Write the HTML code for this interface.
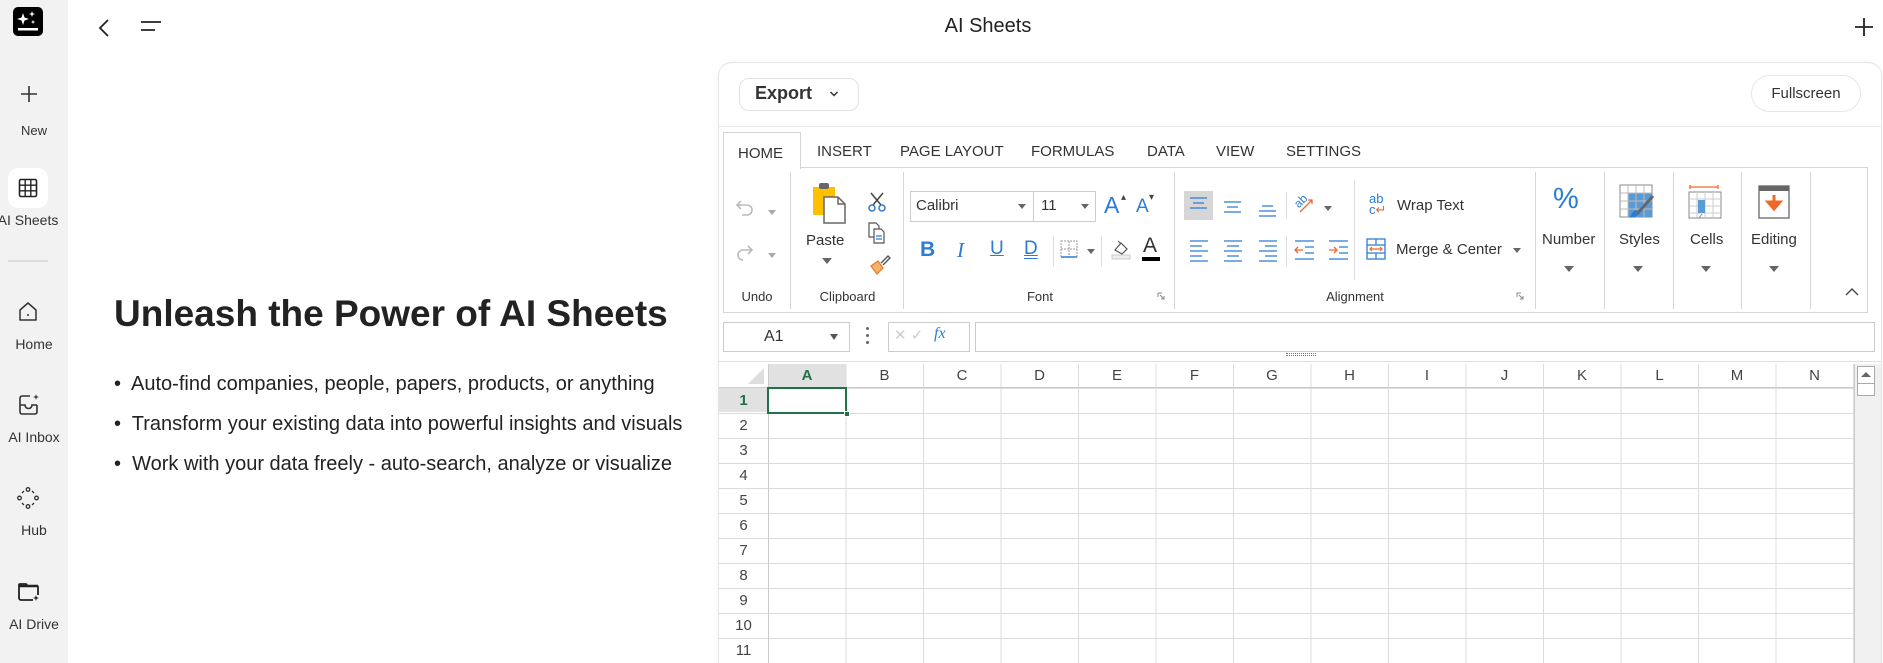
<!DOCTYPE html>
<html><head><meta charset="utf-8"><style>
*{box-sizing:border-box;margin:0;padding:0}
html,body{width:1883px;height:663px;overflow:hidden;background:#fff}
body{font-family:"Liberation Sans",Arial,sans-serif;color:#222}
#root{position:relative;width:1883px;height:663px;overflow:hidden}
.a{position:absolute}
.side{left:0;top:0;width:68px;height:663px;background:#f2f2f2}
.lbl{width:68px;text-align:center;font-size:13px;color:#333}
.tab{font-size:15px;color:#333;top:143px}
.gl{font-size:13px;color:#333;top:289px;text-align:center}
.sep{width:1px;background:#d6d6d6;top:172px;height:137px}
.rl{font-size:15px;color:#333}
.tri{width:0;height:0;border-left:5px solid transparent;border-right:5px solid transparent;border-top:6px solid #666}
.ch{top:364px;height:24px;font-size:15px;color:#444;text-align:center;line-height:24px}
.rh{left:719px;width:49px;height:25px;font-size:15px;color:#444;text-align:center;line-height:25px}
</style></head><body><div id="root">
<div class="a side"></div>
<div class="a" style="left:13px;top:7px;width:30px;height:29px;background:#000;border-radius:5px"></div>
<svg class="a" style="left:13px;top:7px" width="30" height="29" viewBox="0 0 30 29"><path d="M10 6 L11.5 10.5 L16 12 L11.5 13.5 L10 18 L8.5 13.5 L4 12 L8.5 10.5Z" fill="#fff"/><path d="M19 4 L19.8 6.2 L22 7 L19.8 7.8 L19 10 L18.2 7.8 L16 7 L18.2 6.2Z" fill="#fff"/><path d="M20 13 L20.6 14.4 L22 15 L20.6 15.6 L20 17 L19.4 15.6 L18 15 L19.4 14.4Z" fill="#fff"/><rect x="5" y="21" width="20" height="2.5" fill="#fff"/></svg>
<svg class="a" style="left:18px;top:83px" width="22" height="22"><path d="M11 3v16M3 11h16" stroke="#333" stroke-width="1.6"/></svg>
<div class="a lbl" style="top:123px">New</div>
<div class="a" style="left:8px;top:168px;width:40px;height:40px;background:#fff;border-radius:10px"></div>
<svg class="a" style="left:18px;top:178px" width="20" height="20"><rect x="1.5" y="1.5" width="17" height="17" rx="1.5" fill="none" stroke="#222" stroke-width="1.6"/><path d="M7.2 1.5v17M12.8 1.5v17M1.5 7.2h17M1.5 12.8h17" stroke="#222" stroke-width="1.4"/></svg>
<div class="a lbl" style="top:212px;left:-6px;font-size:14px">AI Sheets</div>
<div class="a" style="left:8px;top:260px;width:40px;height:2px;background:#ddd"></div>
<svg class="a" style="left:17px;top:300px" width="22" height="24"><path d="M3 10 L11 3 L19 10 V20 H3Z" fill="none" stroke="#333" stroke-width="1.5" stroke-linejoin="round"/><circle cx="11" cy="15" r="1" fill="#333"/></svg>
<div class="a lbl" style="top:336px;font-size:14px">Home</div>
<svg class="a" style="left:17px;top:393px" width="24" height="24"><path d="M13 3H5a2 2 0 0 0-2 2v14a2 2 0 0 0 2 2h13a2 2 0 0 0 2-2V12" fill="none" stroke="#333" stroke-width="1.6"/><path d="M3 12h5c0 2 1.5 3.5 3.5 3.5S15 14 15 12h5" fill="none" stroke="#333" stroke-width="1.6"/><path d="M19 1 L19.7 3.3 L22 4 L19.7 4.7 L19 7 L18.3 4.7 L16 4 L18.3 3.3Z" fill="#333"/></svg>
<div class="a lbl" style="top:429px;font-size:14px">AI Inbox</div>
<svg class="a" style="left:16px;top:486px" width="24" height="24"><g fill="none" stroke="#333" stroke-width="1.3"><circle cx="12" cy="3.5" r="1.8"/><circle cx="3.5" cy="12" r="1.8"/><circle cx="20.5" cy="12" r="1.8"/><circle cx="12" cy="20.5" r="1.8"/><path d="M6 7L8 5M16 5L18 7M6 17L8 19M16 19L18 17"/></g></svg>
<div class="a lbl" style="top:522px;font-size:14px">Hub</div>
<svg class="a" style="left:17px;top:580px" width="24" height="24"><path d="M2 5V18a2 2 0 0 0 2 2h12M2 5a1 1 0 0 1 1-1h6l2 2h9a1 1 0 0 1 1 1v8" fill="none" stroke="#222" stroke-width="1.8"/><path d="M2 6h19" stroke="#222" stroke-width="2.5"/><path d="M19 15 L19.8 17.2 L22 18 L19.8 18.8 L19 21 L18.2 18.8 L16 18 L18.2 17.2Z" fill="#222"/></svg>
<div class="a lbl" style="top:616px;font-size:14px">AI Drive</div>

<svg class="a" style="left:96px;top:18px" width="16" height="20"><path d="M12 2L4 10L12 18" fill="none" stroke="#222" stroke-width="1.8"/></svg>
<svg class="a" style="left:139px;top:19px" width="24" height="14"><path d="M2 3h20M2 11h14" stroke="#222" stroke-width="1.8"/></svg>
<div class="a" style="left:900px;top:15px;width:176px;text-align:center;font-size:20px;color:#222">AI Sheets</div>
<svg class="a" style="left:1853px;top:16px" width="22" height="22"><path d="M11 2v18M2 11h18" stroke="#222" stroke-width="1.8"/></svg>

<div class="a" style="left:114px;top:293px;font-size:37px;font-weight:bold;color:#222;white-space:nowrap">Unleash the Power of AI Sheets</div>
<div class="a" style="left:114px;top:364px;font-size:20px;line-height:40px;color:#222;white-space:nowrap">
<div>•&nbsp; Auto-find companies, people, papers, products, or anything</div>
<div>•&nbsp; Transform your existing data into powerful insights and visuals</div>
<div>•&nbsp; Work with your data freely - auto-search, analyze or visualize</div>
</div>

<div class="a" style="left:718px;top:62px;width:1164px;height:640px;border:1px solid #e6e6e6;border-radius:14px;box-shadow:0 0 6px rgba(0,0,0,.04)"></div>
<div class="a" style="left:739px;top:78px;width:120px;height:33px;border:1px solid #e2e2e2;border-radius:10px"></div>
<div class="a" style="left:755px;top:83px;font-size:18px;font-weight:bold;color:#333">Export</div>
<svg class="a" style="left:829px;top:90px" width="10" height="8"><path d="M1.5 2L5 5.5L8.5 2" fill="none" stroke="#333" stroke-width="1.5"/></svg>
<div class="a" style="left:1751px;top:75px;width:110px;height:37px;border:1px solid #e6e6e6;border-radius:19px;font-size:15px;color:#333;text-align:center;line-height:35px">Fullscreen</div>
<div class="a" style="left:719px;top:126px;width:1162px;height:1px;background:#e6e6e6"></div>

<div class="a" style="left:723px;top:167px;width:1145px;height:146px;border:1px solid #d4d4d4"></div>
<div class="a" style="left:723px;top:132px;width:78px;height:37px;border:1px solid #d4d4d4;border-bottom:none;background:#fff"></div>
<div class="a tab" style="left:738px;top:145px">HOME</div>
<div class="a tab" style="left:817px">INSERT</div>
<div class="a tab" style="left:900px">PAGE LAYOUT</div>
<div class="a tab" style="left:1031px">FORMULAS</div>
<div class="a tab" style="left:1147px">DATA</div>
<div class="a tab" style="left:1216px">VIEW</div>
<div class="a tab" style="left:1286px">SETTINGS</div>

<div class="a sep" style="left:790px"></div>
<div class="a sep" style="left:903px"></div>
<div class="a sep" style="left:1174px"></div>
<div class="a sep" style="left:1535px"></div>
<div class="a sep" style="left:1604px"></div>
<div class="a sep" style="left:1673px"></div>
<div class="a sep" style="left:1741px"></div>
<div class="a sep" style="left:1810px"></div>

<div class="a gl" style="left:727px;width:60px">Undo</div>
<div class="a gl" style="left:800px;width:95px">Clipboard</div>
<div class="a gl" style="left:1000px;width:80px">Font</div>
<div class="a gl" style="left:1305px;width:100px">Alignment</div>
<svg class="a" style="left:1157px;top:292px" width="8" height="8"><path d="M1 1h4M1 1v4M3 3l4 4M7 4v3H4" fill="none" stroke="#888"/></svg>
<svg class="a" style="left:1516px;top:292px" width="8" height="8"><path d="M1 1h4M1 1v4M3 3l4 4M7 4v3H4" fill="none" stroke="#888"/></svg>

<svg class="a" style="left:734px;top:200px" width="22" height="18"><path d="M4 5h9a5 5 0 0 1 0 10H8M7 1L3 5l4 4" fill="none" stroke="#bbb" stroke-width="1.6"/></svg>
<div class="a tri" style="left:768px;top:210px;border-top-color:#aaa;border-width:5px 4px 0"></div>
<svg class="a" style="left:734px;top:245px" width="22" height="20"><path d="M17 5H9a5 5 0 0 0 0 10M14 1l4 4-4 4" fill="none" stroke="#bbb" stroke-width="1.6"/></svg>
<div class="a tri" style="left:768px;top:253px;border-top-color:#aaa;border-width:5px 4px 0"></div>
<svg class="a" style="left:812px;top:182px" width="36" height="42"><rect x="1" y="5" width="22" height="28" fill="#ffc000"/><rect x="7" y="1" width="10" height="6" rx="2" fill="#666"/><path d="M12 15h14l7 7v19H12Z" fill="#fff" stroke="#666" stroke-width="1.5"/><path d="M26 15v7h7" fill="none" stroke="#666" stroke-width="1.5"/></svg>
<div class="a" style="left:806px;top:232px;font-size:15px;color:#333">Paste</div>
<div class="a tri" style="left:822px;top:258px"></div>
<svg class="a" style="left:867px;top:192px" width="20" height="20"><path d="M4 1l10 12M16 1L6 13" stroke="#444" stroke-width="1.5"/><circle cx="5" cy="16" r="3" fill="none" stroke="#2b7cd3" stroke-width="1.5"/><circle cx="15" cy="16" r="3" fill="none" stroke="#2b7cd3" stroke-width="1.5"/></svg>
<svg class="a" style="left:868px;top:222px" width="18" height="22"><path d="M1 1h7l3 3v11H1Z" fill="#fff" stroke="#555" stroke-width="1.2"/><path d="M6 7h7l3 3v11H6Z" fill="#fff" stroke="#555" stroke-width="1.2"/><path d="M8 14h6M8 17h6" stroke="#2b7cd3" stroke-width="1.2"/></svg>
<svg class="a" style="left:869px;top:254px" width="22" height="22"><path d="M2 12l7-5 5 7-6 6Z" fill="#f6b26b" stroke="#e07b2a" stroke-width="1.2"/><path d="M12 9l7-7 2 2-7 7" fill="none" stroke="#555" stroke-width="1.4"/></svg>

<div class="a" style="left:910px;top:191px;width:124px;height:31px;border:1px solid #ccc"></div>
<div class="a" style="left:1033px;top:191px;width:63px;height:31px;border:1px solid #ccc"></div>
<div class="a rl" style="left:916px;top:197px">Calibri</div>
<div class="a tri" style="left:1018px;top:204px;border-width:5px 4px 0"></div>
<div class="a rl" style="left:1041px;top:197px">11</div>
<div class="a tri" style="left:1081px;top:204px;border-width:5px 4px 0"></div>
<div class="a" style="left:1104px;top:192px;font-size:23px;color:#2b7cd3">A</div>
<div class="a" style="left:1121px;top:192px;font-size:10px;color:#444">▴</div>
<div class="a" style="left:1136px;top:196px;font-size:19px;color:#2b7cd3">A</div>
<div class="a" style="left:1149px;top:192px;font-size:10px;color:#444">▾</div>
<div class="a" style="left:920px;top:238px;font-size:21px;font-weight:bold;color:#2b7cd3">B</div>
<div class="a" style="left:957px;top:238px;font-size:21px;font-style:italic;color:#2b7cd3;font-family:'Liberation Serif',serif">I</div>
<div class="a" style="left:990px;top:238px;font-size:19px;text-decoration:underline;color:#2b7cd3">U</div>
<div class="a" style="left:1024px;top:238px;font-size:19px;text-decoration:underline double;color:#2b7cd3">D</div>
<div class="a" style="left:1053px;top:236px;width:1px;height:30px;background:#ddd"></div>
<svg class="a" style="left:1060px;top:240px" width="18" height="18"><rect x="1" y="1" width="16" height="16" fill="none" stroke="#999" stroke-dasharray="2 1"/><path d="M9 1v16M1 9h16" stroke="#999" stroke-dasharray="2 1"/><path d="M1 17h16" stroke="#2b7cd3" stroke-width="1.5"/></svg>
<div class="a tri" style="left:1087px;top:249px;border-width:5px 4px 0"></div>
<div class="a" style="left:1101px;top:236px;width:1px;height:30px;background:#ddd"></div>
<svg class="a" style="left:1111px;top:238px" width="20" height="22"><path d="M4 12l6-7 6 6-5 5Z" fill="#fff" stroke="#555" stroke-width="1.2"/><path d="M7 3l3 3" stroke="#555"/><rect x="1" y="17" width="18" height="4" fill="#eee" stroke="#ccc"/></svg>
<div class="a" style="left:1143px;top:234px;font-size:21px;color:#333">A</div>
<div class="a" style="left:1142px;top:257px;width:18px;height:4px;background:#000"></div>

<div class="a" style="left:1184px;top:191px;width:29px;height:29px;background:#d6d6d6"></div>
<svg class="a" style="left:1188px;top:195px" width="22" height="20"><path d="M2 3h17M5 8h11M2 13h17" stroke="#2b7cd3" stroke-width="1.3"/></svg>
<svg class="a" style="left:1222px;top:197px" width="22" height="20"><path d="M2 5h17M5 10h11M2 15h17" stroke="#2b7cd3" stroke-width="1.3"/></svg>
<svg class="a" style="left:1257px;top:199px" width="22" height="20"><path d="M5 7h11M2 12h17M2 17h17" stroke="#2b7cd3" stroke-width="1.3"/></svg>
<div class="a" style="left:1286px;top:192px;width:1px;height:26px;background:#ddd"></div>
<div class="a" style="left:1294px;top:194px;font-size:12px;color:#2b7cd3;transform:rotate(-45deg)">ab</div>
<svg class="a" style="left:1298px;top:194px" width="16" height="22"><path d="M2 18L14 6M10 6h4v4" fill="none" stroke="#f0672a" stroke-width="1.3"/></svg>
<div class="a tri" style="left:1324px;top:206px;border-width:5px 4px 0"></div>
<svg class="a" style="left:1188px;top:238px" width="22" height="26"><path d="M2 3h18M2 8h12M2 13h18M2 18h12M2 23h18" stroke="#2b7cd3" stroke-width="1.3"/></svg>
<svg class="a" style="left:1222px;top:238px" width="22" height="26"><path d="M2 3h18M5 8h12M2 13h18M5 18h12M2 23h18" stroke="#2b7cd3" stroke-width="1.3"/></svg>
<svg class="a" style="left:1257px;top:238px" width="22" height="26"><path d="M2 3h18M8 8h12M2 13h18M8 18h12M2 23h18" stroke="#2b7cd3" stroke-width="1.3"/></svg>
<div class="a" style="left:1286px;top:236px;width:1px;height:30px;background:#ddd"></div>
<svg class="a" style="left:1293px;top:238px" width="24" height="24"><path d="M2 3h19M12 9h9M12 15h9M2 21h19" stroke="#2b7cd3" stroke-width="1.3"/><path d="M10 12H2M5 9l-3 3 3 3" fill="none" stroke="#f0672a" stroke-width="1.3"/></svg>
<svg class="a" style="left:1327px;top:238px" width="24" height="24"><path d="M2 3h19M12 9h9M12 15h9M2 21h19" stroke="#2b7cd3" stroke-width="1.3"/><path d="M2 12h8M7 9l3 3-3 3" fill="none" stroke="#f0672a" stroke-width="1.3"/></svg>
<div class="a" style="left:1354px;top:180px;width:1px;height:100px;background:#ddd"></div>
<div class="a" style="left:1369px;top:193px;font-size:13px;line-height:11px;color:#2b7cd3">ab<br>c<span style="color:#f0672a">↵</span></div>
<div class="a rl" style="left:1397px;top:197px">Wrap Text</div>
<svg class="a" style="left:1366px;top:238px" width="20" height="22"><rect x="1" y="1" width="18" height="20" fill="#fff" stroke="#2b7cd3" stroke-width="1.3"/><path d="M1 7h18M1 15h18M10 1v6M10 15v6" stroke="#2b7cd3" stroke-width="1.2"/><path d="M4 11h12M6 9l-2 2 2 2M14 9l2 2-2 2" fill="none" stroke="#f0672a" stroke-width="1.2"/></svg>
<div class="a rl" style="left:1396px;top:241px">Merge &amp; Center</div>
<div class="a tri" style="left:1513px;top:248px;border-width:5px 4px 0"></div>

<div class="a" style="left:1553px;top:183px;font-size:29px;color:#2b7cd3">%</div>
<div class="a rl" style="left:1542px;top:231px">Number</div>
<div class="a tri" style="left:1564px;top:266px"></div>
<svg class="a" style="left:1619px;top:184px" width="36" height="36"><rect x="1" y="1" width="32" height="32" fill="#fff" stroke="#888"/><rect x="9" y="9" width="24" height="24" fill="#5b9bd5"/><path d="M1 9h32M1 17h32M1 25h32M9 1v32M17 1v32M25 1v32" stroke="#bbb"/><path d="M34 12L18 30" stroke="#666" stroke-width="3"/><path d="M14 28c2-3 6-2 5 2s-6 4-9 3c2-1 2-3 4-5Z" fill="#2b7cd3"/></svg>
<div class="a rl" style="left:1619px;top:231px">Styles</div>
<div class="a tri" style="left:1633px;top:266px"></div>
<svg class="a" style="left:1688px;top:184px" width="36" height="38"><path d="M2 3h28M2 1v4M30 1v4" stroke="#f0672a" stroke-width="1.3"/><rect x="1" y="8" width="32" height="26" fill="#fff" stroke="#888"/><path d="M1 15h32M1 22h32M1 29h32M9 8v26M17 8v26M25 8v26" stroke="#ccc"/><rect x="10" y="16" width="7" height="13" fill="#5b9bd5"/><path d="M1 34h10l3-4" fill="none" stroke="#888"/></svg>
<div class="a rl" style="left:1690px;top:231px">Cells</div>
<div class="a tri" style="left:1701px;top:266px"></div>
<svg class="a" style="left:1758px;top:185px" width="32" height="34"><rect x="1" y="1" width="30" height="32" fill="#fff" stroke="#666" stroke-width="1.3"/><rect x="1" y="1" width="30" height="5" fill="#666"/><path d="M16 10v12M10 17l6 7 6-7Z" stroke="#f0672a" stroke-width="3" fill="#f0672a"/></svg>
<div class="a rl" style="left:1751px;top:231px">Editing</div>
<div class="a tri" style="left:1769px;top:266px"></div>
<svg class="a" style="left:1845px;top:287px" width="14" height="10"><path d="M1 8L7 2l6 6" fill="none" stroke="#444" stroke-width="1.4"/></svg>

<div class="a" style="left:723px;top:322px;width:127px;height:30px;border:1px solid #ccc"></div>
<div class="a rl" style="left:764px;top:328px;font-size:16px">A1</div>
<div class="a tri" style="left:830px;top:334px;border-width:6px 4px 0;border-top-color:#555"></div>
<div class="a" style="left:866px;top:327px;width:3px;height:3px;background:#666;border-radius:2px;box-shadow:0 7px 0 #666,0 14px 0 #666"></div>
<div class="a" style="left:888px;top:322px;width:82px;height:30px;border:1px solid #ccc"></div>
<div class="a" style="left:894px;top:326px;font-size:15px;color:#ccc">✕ ✓</div>
<div class="a" style="left:934px;top:325px;font-size:16px;font-style:italic;color:#2b7cd3;font-family:'Liberation Serif',serif">fx</div>
<div class="a" style="left:975px;top:322px;width:900px;height:30px;border:1px solid #ccc"></div>
<div class="a" style="left:1286px;top:353px;width:30px;height:3px;border-top:1px dotted #777;border-bottom:1px dotted #777"></div>
<div class="a" style="left:719px;top:361px;width:1162px;height:1px;background:#e0e0e0"></div>

<div class="a" style="left:719px;top:364px;width:1135px;height:299px;background-image:repeating-linear-gradient(to bottom,transparent 0,transparent 24px,#dcdcdc 24px,#dcdcdc 25px)"></div>
<div class="a" style="left:768px;top:364px;width:1086px;height:299px;background-image:repeating-linear-gradient(to right,#dcdcdc 0,#dcdcdc 1px,transparent 1px,transparent 77.5px)"></div>
<div class="a" style="left:768px;top:364px;width:1px;height:299px;background:#ccc"></div>
<div class="a" style="left:719px;top:387px;width:1135px;height:1px;background:#ccc"></div>
<svg class="a" style="left:740px;top:366px" width="26" height="20"><path d="M24 2V18H8Z" fill="#dedede"/></svg>
<div class="a" style="left:769px;top:364px;width:77px;height:23px;background:#e1e1e1"></div>
<div class="a" style="left:719px;top:388px;width:49px;height:24px;background:#e1e1e1"></div>
<div class="a ch" style="left:768px;width:78px;color:#217346;font-weight:bold">A</div>
<div class="a ch" style="left:846px;width:77px">B</div>
<div class="a ch" style="left:923px;width:78px">C</div>
<div class="a ch" style="left:1001px;width:77px">D</div>
<div class="a ch" style="left:1078px;width:78px">E</div>
<div class="a ch" style="left:1156px;width:77px">F</div>
<div class="a ch" style="left:1233px;width:78px">G</div>
<div class="a ch" style="left:1311px;width:77px">H</div>
<div class="a ch" style="left:1388px;width:78px">I</div>
<div class="a ch" style="left:1466px;width:77px">J</div>
<div class="a ch" style="left:1543px;width:78px">K</div>
<div class="a ch" style="left:1621px;width:77px">L</div>
<div class="a ch" style="left:1698px;width:78px">M</div>
<div class="a ch" style="left:1776px;width:77px">N</div>
<div class="a rh" style="top:388px;color:#217346;font-weight:bold">1</div>
<div class="a rh" style="top:413px">2</div>
<div class="a rh" style="top:438px">3</div>
<div class="a rh" style="top:463px">4</div>
<div class="a rh" style="top:488px">5</div>
<div class="a rh" style="top:513px">6</div>
<div class="a rh" style="top:538px">7</div>
<div class="a rh" style="top:563px">8</div>
<div class="a rh" style="top:588px">9</div>
<div class="a rh" style="top:613px">10</div>
<div class="a rh" style="top:638px">11</div>
<div class="a" style="left:767px;top:387px;width:80px;height:27px;border:2px solid #217346"></div>
<div class="a" style="left:844px;top:411px;width:6px;height:6px;background:#217346;border:1px solid #fff"></div>
<div class="a" style="left:1854px;top:364px;width:27px;height:299px;background:#f0f0f0;border-left:1px solid #ccc"></div>
<div class="a" style="left:1857px;top:366px;width:18px;height:18px;border:1px solid #aaa;background:#fff"></div>
<div class="a tri" style="left:1861px;top:372px;border-top:none;border-bottom:5px solid #666;border-left-width:5px;border-right-width:5px"></div>
<div class="a" style="left:1857px;top:383px;width:18px;height:13px;border:1px solid #aaa;background:#fff"></div>
</div></body></html>
